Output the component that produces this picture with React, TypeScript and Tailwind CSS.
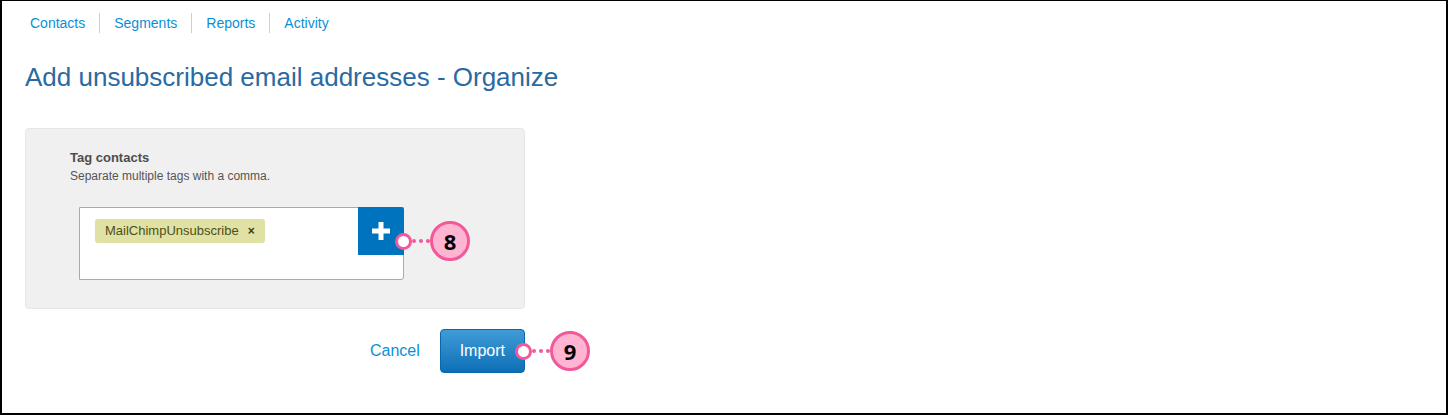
import { useState } from "react";

function Marker({ n }: { n: string }) {
  return (
    <div className="absolute flex items-center pointer-events-none" style={{ left: 0, top: 0 }}>
      <span className="w-[17px] h-[17px] rounded-full bg-white border-[3px] border-[#f2599a] shrink-0" />
      <span className="w-[18px] border-t-[4px] border-dotted border-[#f2599a]" />
      <span className="w-[40px] h-[40px] rounded-full bg-[#ffb4d2] border-[3px] border-[#f2599a] flex items-center justify-center text-[22px] font-bold text-black font-['Open_Sans',sans-serif]">
        {n}
      </span>
    </div>
  );
}

function App() {
  const [tags, setTags] = useState(["MailChimpUnsubscribe"]);
  const links = ["Contacts", "Segments", "Reports", "Activity"];

  return (
    <div className="w-[1448px] h-[415px] bg-white border-t border-l-2 border-r-2 border-b-2 border-black font-['Liberation_Sans',Arial,sans-serif] overflow-hidden">
      {/* top nav */}
      <ul className="flex items-center pl-[28px] pt-[11px] h-[33px]">
        {links.map((l, i) => (
          <li
            key={l}
            className={
              i === 0
                ? "text-[14px] text-[#0a8fd6] leading-[20px]"
                : "pl-[14px] ml-[14px] border-l border-[#cfcfcf] text-[14px] text-[#0a8fd6] leading-[20px]"
            }
          >
            {l}
          </li>
        ))}
      </ul>

      <h1 className="ml-[23px] mt-[28px] text-[26px] leading-[30px] text-[#2a6aa2]">
        Add unsubscribed email addresses - Organize
      </h1>

      {/* tag panel */}
      <div className="ml-[23px] mt-[36px] w-[500px] h-[181px] bg-[#f0f0f0] border border-[#e6e6e6] rounded-[4px] pl-[44px] pt-[21px]">
        <h3 className="text-[13px] font-bold text-[#4d4d4d] leading-[16px]">Tag contacts</h3>
        <p className="text-[12px] text-[#555] leading-[16px] mt-[2px]">Separate multiple tags with a comma.</p>

        <div className="relative mt-[23px] ml-[9px] w-[325px] h-[73px] bg-white border border-[#aaaaaa] rounded-br-[3px] flex">
          <div className="flex-1 pl-[15px] pt-[10px]">
            {tags.map((t) => (
              <span
                key={t}
                className="inline-flex items-center h-[24px] px-[10px] bg-[#dfe2a4] rounded-[3px] text-[13px] text-[#4f4f14]"
              >
                {t}
                <button
                  className="ml-[9px] text-[12px] font-bold text-[#3e3e10] leading-none"
                  onClick={() => setTags(tags.filter((x) => x !== t))}
                >
                  ×
                </button>
              </span>
            ))}
          </div>
          <button className="w-[46px] h-[48px] -mt-px -mr-px bg-[#0073bf] rounded-tr-[3px] flex items-center justify-center">
            <svg width="18" height="18" viewBox="0 0 18 18">
              <rect x="6.5" y="0" width="5" height="18" fill="#fff" />
              <rect x="0" y="6.5" width="18" height="5" fill="#fff" />
            </svg>
          </button>
          <div className="absolute left-[315px] top-[13px]">
            <Marker n="8" />
          </div>
        </div>
      </div>

      {/* actions */}
      <div className="relative flex items-center ml-[368px] mt-[20px] h-[44px]">
        <a className="text-[16px] text-[#0a8fd6] mr-[20px]">Cancel</a>
        <button className="w-[85px] h-[44px] rounded-[4px] border border-[#0a67a8] bg-gradient-to-b from-[#3d9cd7] to-[#0a6fb7] text-white text-[16px]">
          Import
        </button>
        <div className="absolute left-[145px] top-[2px]">
          <Marker n="9" />
        </div>
      </div>
    </div>
  );
}

export default App;
